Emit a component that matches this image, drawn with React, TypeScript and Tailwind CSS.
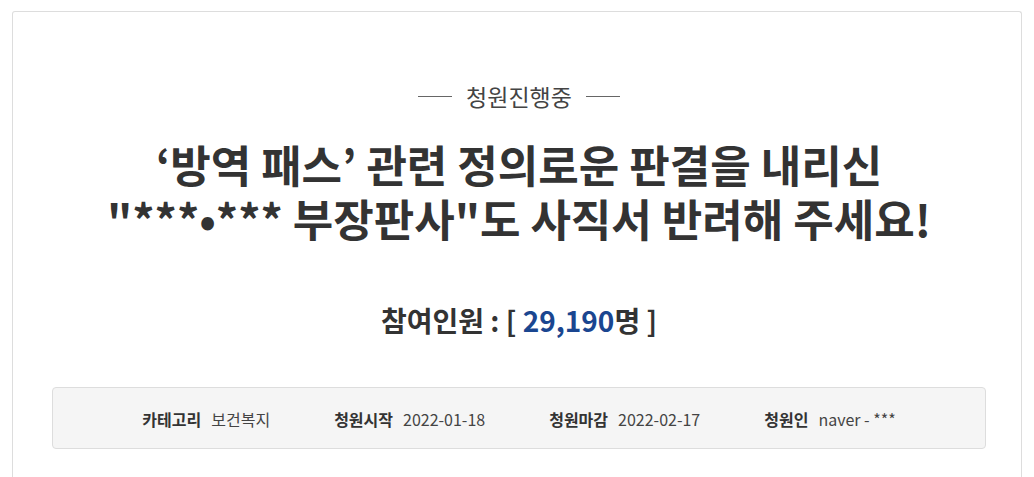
const info = [
  { label: '카테고리', value: '보건복지' },
  { label: '청원시작', value: '2022-01-18' },
  { label: '청원마감', value: '2022-02-17' },
  { label: '청원인', value: 'naver - ***' },
];

export default function App() {
  return (
    <div
      className="min-h-screen bg-white pt-[11px] pl-[12px] pr-[12px] text-[#333]"
      style={{ fontFamily: '"Noto Sans CJK KR", "Noto Sans", sans-serif' }}
    >
      <div className="h-[480px] rounded-tl-[3px] rounded-tr-[3px] border border-b-0 border-[#ddd] pl-[39px] pr-[35px] pt-[68px]">
        {/* status */}
        <div className="flex items-center justify-center gap-[14px]">
          <span className="h-px w-[34px] bg-[#666]" />
          <span className="text-[23px] leading-[32px] text-[#444]">청원진행중</span>
          <span className="h-px w-[34px] bg-[#666]" />
        </div>

        {/* title */}
        <h1 className="mt-[25px] text-center text-[44px] font-bold leading-[54px] text-[#333]">
          ‘방역 패스’ 관련 정의로운 판결을 내리신
          <br />
          "***•*** 부장판사"도 사직서 반려해 주세요!
        </h1>

        {/* count */}
        <div className="mt-[56px] text-center text-[28px] font-bold leading-[38px] text-[#333]">
          참여인원 : [ <span className="text-[#1a4690]">29,190</span>명 ]
        </div>

        {/* info */}
        <div className="mt-[48px] flex h-[62px] items-center justify-center gap-[64px] rounded-[4px] border border-[#ddd] bg-[#f5f5f5] pt-[2px]">
          {info.map((i) => (
            <div key={i.label} className="flex items-center gap-[10px] text-[16px] leading-[24px]">
              <span className="font-bold text-[#333]">{i.label}</span>
              <span className="text-[#444]">{i.value}</span>
            </div>
          ))}
        </div>
      </div>
    </div>
  );
}
